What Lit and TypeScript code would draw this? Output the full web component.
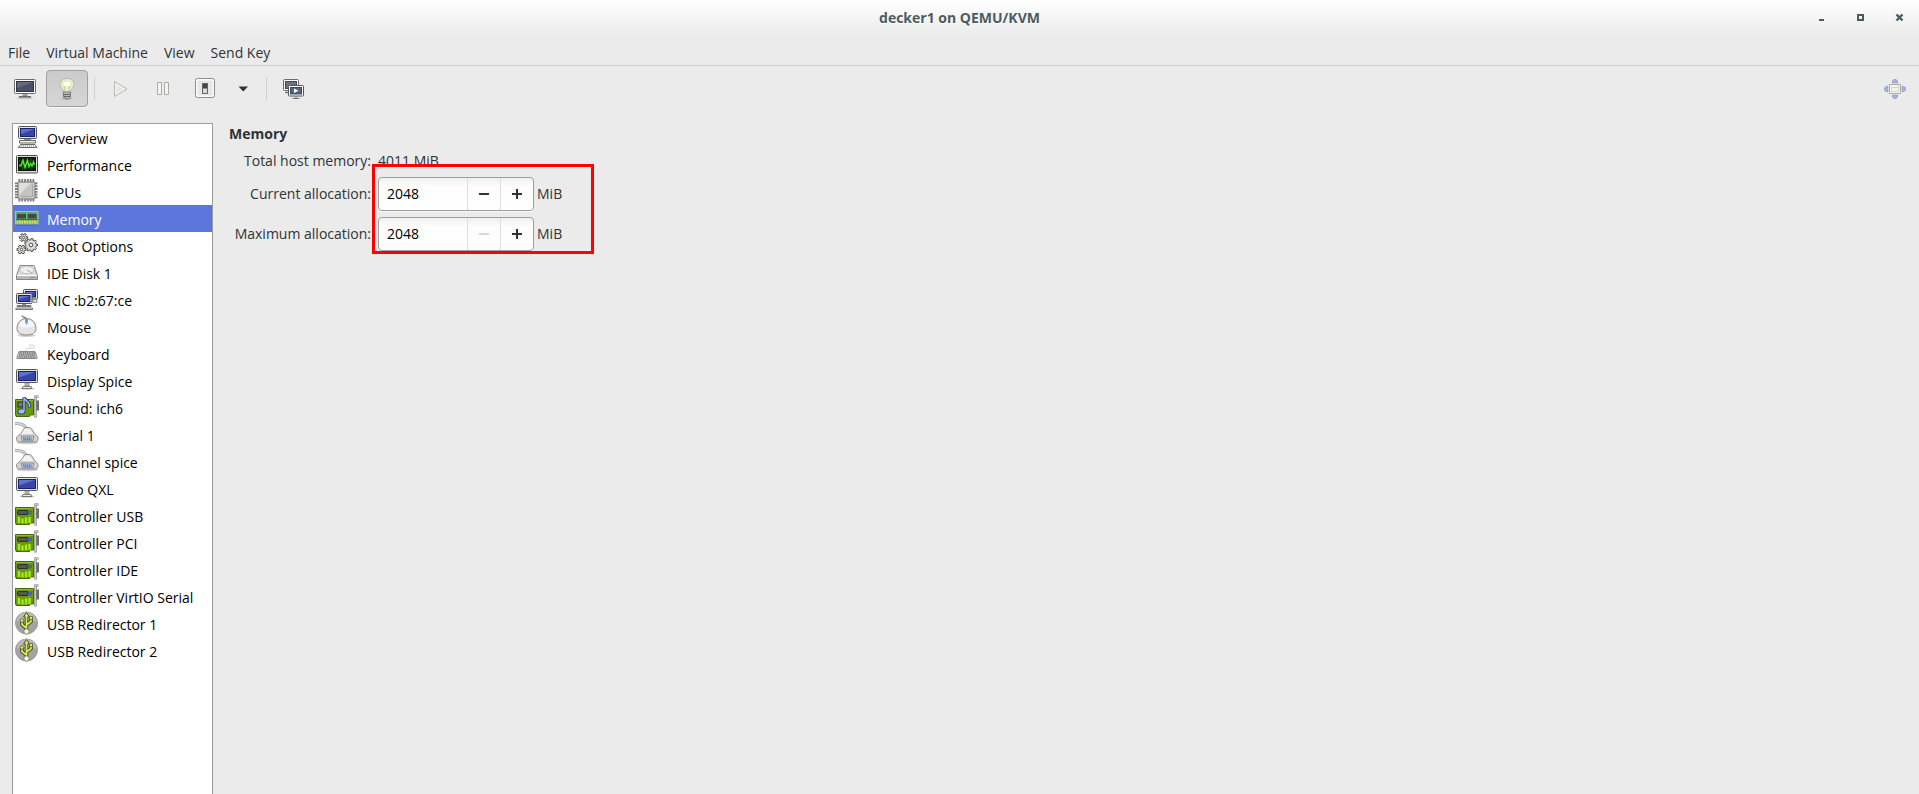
import { LitElement, html, css, svg, nothing } from "lit";
import { customElement, property, state } from "lit/decorators.js";

const screen = (x: number, y: number, w: number, h: number) => svg`
  <rect x=${x} y=${y} width=${w} height=${h} rx="1" fill="#e2e2de" stroke="#555753"/>
  <rect x=${x + 2} y=${y + 2} width=${w - 4} height=${h - 4} fill="#3645a8" stroke="#1b1f6e"/>
  <path d="M${x + 2.5} ${y + 2.5}h${w - 5}l-${w - 5} ${(h - 5) * 0.7}z" fill="#7f8fdd" opacity=".6"/>`;

const card = svg`
  <path d="M.5 4.500h18v15.500h-4v1.500h-13.500v-1.500h-.5z" fill="#69990f" stroke="#47690b"/>
  <rect x="1" y="5" width="17" height="1" fill="#8dbb2c"/>`;

const bracket = svg`
  <path d="M23.500 1.500h-3v21M20.500 6.500h2.500v3h-2.500M20.500 11.500h2.500v3h-2.500" fill="none" stroke="#6f716d" stroke-width="2.200"/>
  <path d="M23.500 1.500h-3v21" fill="none" stroke="#c9cbc7"/>`;

const gear = (cx: number, cy: number, r: number, teeth: number) => {
  const points: string[] = [];
  for (let i = 0; i < teeth; i++) {
    for (const [offset, radius] of [[-0.3, r - 1.4], [-0.22, r], [0.22, r], [0.3, r - 1.4]]) {
      const angle = ((i + offset) / teeth) * Math.PI * 2;
      points.push(`${(cx + radius * Math.cos(angle)).toFixed(2)},${(cy + radius * Math.sin(angle)).toFixed(2)}`);
    }
  }
  return svg`
    <polygon points=${points.join(" ")} fill="#dddeda" stroke="#4f514d" stroke-linejoin="round"/>
    <circle cx=${cx} cy=${cy} r=${r * 0.28} fill="#fff" stroke="#4f514d"/>`;
};

const serial = svg`
  <ellipse cx="12.500" cy="20.500" rx="11" ry="1.800" fill="#000" opacity=".18"/>
  <path d="M0 1.500c7 0 9 1 12 5.500" fill="none" stroke="#a1a39f" stroke-width="3"/>
  <path d="M0 1.500c7 0 9 1 12 5.500" fill="none" stroke="#dadcd8" stroke-width="1.500"/>
  <path d="M1.500 15.500c1-2 4-3 5.500-5.500 1-2 2-4 3.500-4.500h4c2 .5 3 2.500 4 4.500 1.500 2.500 4 3.500 4.500 5.500v2c-.3 1.700-1.500 2.500-3 2.500h-15.500c-1.500 0-2.700-.8-3-2.500z" fill="#d4d5d3" stroke="#8b8d89"/>
  <path d="M6 12l4-5.500h4.500l4 5.500z" fill="#f2f2f1"/>
  <path d="M6 14h13l-1.300 5h-10.400z" fill="#c3cde0" stroke="#8b8d89"/>
  <path d="M8 15.800h9M8.500 17.500h8" stroke="#4d70b5" stroke-dasharray="1.200 .6" stroke-width="1.300"/>`;

const art: Record<string, unknown> = {
  computer: svg`
    <ellipse cx="12" cy="22" rx="11" ry="1.500" fill="#000" opacity=".12"/>
    ${screen(3.5, 1.5, 18, 12)}
    <path d="M9 14h7v2h-7z" fill="#888a85"/>
    <path d="M4.500 15.500h16v2.500h-16z" fill="#eeeeec" stroke="#6a6c68"/>
    <path d="M5.500 19.500h14.500l2 3h-18.500z" fill="#eeeeec" stroke="#6a6c68"/>
    <path d="M6 21h14" stroke="#888a85" stroke-dasharray="1 1"/>`,
  performance: svg`
    <rect x="1.500" y="3.500" width="21" height="17.500" rx="1" fill="#dcdcd8" stroke="#4c4e4a"/>
    <rect x="3.500" y="5.500" width="17" height="13" fill="#0c240c" stroke="#111"/>
    <path d="M4 9h16M4 12h16M4 15h16M8 6v12M12 6v12M16 6v12" stroke="#1f5c1f" stroke-width=".8"/>
    <path d="M4 13.500h2l2-5 2 7 2.500-7 1.500 6 1.500-3 1.500 2.500 1.500-4 1 3" fill="none" stroke="#52e62c" stroke-width="1.400"/>`,
  cpu: svg`
    <path d="M3.500 1.500h16M3.500 21h16" stroke="#777975" stroke-width="3" stroke-dasharray="1.800 1"/>
    <path d="M1.500 3.500v16M21 3.500v16" stroke="#777975" stroke-width="3" stroke-dasharray="1.800 1"/>
    <rect x="3" y="3" width="17" height="17" rx="1" fill="#c4c5c3" stroke="#80827e"/>
    <path d="M4 16v-12h12z" fill="#dfe0de"/>
    <path d="M6 17.500h11.500v-12" fill="none" stroke="#a9aba7"/>`,
  memory: svg`
    <rect x=".5" y="5.500" width="22.500" height="12.500" fill="#57a866" stroke="#9acfa4"/>
    <path d="M2 8h19.500v4.500h-19.500z" fill="#4b4548"/>
    <path d="M11.800 6.500v7" stroke="#37e05f" stroke-width="1.500"/>
    <path d="M1 13.500h22" stroke="#2d7a3e"/>
    <path d="M1.500 16h21" stroke="#eadb55" stroke-width="3" stroke-dasharray="1.800 .7"/>
    <path d="M1 19h22" stroke="#254180" opacity=".45"/>`,
  boot: svg`${gear(8.5, 4.5, 4.2, 6)}${gear(6.5, 16.5, 4.6, 6)}${gear(16, 12, 6.5, 9)}`,
  disk: svg`
    <path d="M5 5.500h14l3.500 10v4h-21v-4z" fill="#dcdddb" stroke="#858783"/>
    <path d="M2 15.500h20v3.500h-20z" fill="#b8bab6"/>
    <path d="M2 15.500h20" stroke="#fff"/>
    <ellipse cx="12" cy="10" rx="7" ry="3.800" fill="#eeefed" stroke="#c0c2be"/>
    <path d="M12 10l5 3" stroke="#aaaca8"/>
    <path d="M15 17.500h5" stroke="#777975" stroke-dasharray="1 .7"/>`,
  network: svg`
    ${screen(8.5, 2.5, 14, 9.5)}
    <path d="M18 12.500h4v3h-4z" fill="#ddd" stroke="#767874" stroke-width=".7"/>
    ${screen(1.5, 6.5, 15.5, 10)}
    <path d="M7 17h4v1.500h-4z" fill="#888a85"/>
    <path d="M2 18.500h14v1h-14zM1.500 21h16v1.500h-17z" fill="#eee" stroke="#777975"/>`,
  mouse: svg`
    <ellipse cx="11.500" cy="21.500" rx="9" ry="1.500" fill="#000" opacity=".2"/>
    <path d="M7 1.500c0 3 4 0 4.500 4" fill="none" stroke="#6b6d69" stroke-width="1.200"/>
    <path d="M11.500 4.500c6 0 9.500 5 9.500 10 0 4-3 6.500-9.500 6.500s-9.500-2.500-9.500-6.500c0-5 3.500-10 9.500-10z" fill="#e4e5e3" stroke="#858783"/>
    <path d="M11.500 5.500c-4 0-7 3-8 6.500 5 2 11 2 16 0-1-3.500-4-6.500-8-6.500z" fill="#f5f5f5"/>
    <path d="M10 5h3v3l-1.500 3-1.500-3z" fill="#7897d6"/>`,
  keyboard: svg`
    <path d="M11 10c0-2 1-3 4-3s5 0 4-2-4 0-5-1" fill="none" stroke="#cfd1cd"/>
    <path d="M4 10.500h16l2 5.500v1.500h-20v-1.500z" fill="#dededc" stroke="#8b8d89"/>
    <path d="M4.500 12h15.500M4 14h16.500M3.500 16h17" stroke="#666864" stroke-dasharray="1.300 .5" stroke-width="1.300"/>`,
  display: svg`
    <ellipse cx="12" cy="20.500" rx="8" ry="1.500" fill="#000" opacity=".15"/>
    ${screen(1.5, 1.5, 21, 13)}
    <path d="M10 15h4v3h-4z" fill="#bbb" stroke="#777975" stroke-width=".6"/>
    <path d="M8 18.500h8l1 2h-10z" fill="#eee" stroke="#777975"/>`,
  sound: svg`${card}
    <rect x="3" y="7" width="5" height="5" fill="#777975" stroke="#333"/>
    ${bracket}
    <path d="M9 16v-13.500c1 3 6 3 5.500 10" fill="none" stroke="#253f78" stroke-width="3.200"/>
    <ellipse cx="6.500" cy="16.500" rx="3.500" ry="2.700" fill="#a0bdeb" stroke="#253f78"/>
    <path d="M9 16v-13c1 3 6 3 5.500 9" fill="none" stroke="#a0bdeb" stroke-width="1.400"/>`,
  serial,
  card: svg`${card}
    <path d="M4 20v-6M7.500 20.500v-5M11 20.500v-6M14.500 20v-6" stroke="#a4ee12" stroke-width="2.300"/>
    <rect x="2.500" y="7.500" width="10.500" height="4" rx="1" fill="#555852" stroke="#2c2e2a"/>
    <path d="M13 8.500h4M13 10.500h4" stroke="#3c62a8" stroke-width="1.300"/>
    ${bracket}`,
  usb: svg`
    <circle cx="11.500" cy="12" r="11" fill="#a3a4a2" stroke="#999b97"/>
    <path d="M1.500 11a10 10 0 0 1 20 0c-6-3-14-3-20 0z" fill="#b9bab8"/>
    <path d="M11.500 20v-16M11.500 17l-4.500-3.500v-4M11.500 14l4.500-3.500v-4" fill="none" stroke="#4a5128" stroke-width="3.600"/>
    <path d="M11.500 1.500l3 4.500h-6z" fill="#dcec60" stroke="#4a5128"/>
    <path d="M11.500 20v-15M11.500 17l-4.500-3.500v-4M11.500 14l4.500-3.500v-4" fill="none" stroke="#dcec60" stroke-width="1.600"/>
    <circle cx="7" cy="9.500" r="1.800" fill="#dcec60" stroke="#4a5128" stroke-width=".7"/>
    <path d="M14.500 5.500h3v3h-3z" fill="#dcec60" stroke="#4a5128" stroke-width=".7"/>
    <circle cx="11.500" cy="20.500" r="2.600" fill="#fbfde0" stroke="#6b7050" stroke-width=".7"/>`,
  console: svg`
    <ellipse cx="12" cy="21" rx="8" ry="1.300" fill="#000" opacity=".15"/>
    <rect x="1.500" y="2.500" width="21" height="14" rx="1" fill="#fff" stroke="#6a6c68"/>
    <rect x="3.500" y="4.500" width="17" height="10" fill="#4a5268" stroke="#30343f"/>
    <path d="M4 5h16l-16 6z" fill="#70788c" opacity=".7"/>
    <path d="M9.500 17h5v2h-5z" fill="#999"/><path d="M6 19h12v1.500h-12z" fill="#666864"/>`,
  bulb: svg`
    <ellipse cx="12" cy="21.500" rx="6" ry="1.300" fill="#000" opacity=".15"/>
    <path d="M12 1.500c4.500 0 7 2.500 7 6 0 4-3.500 4.500-4 8h-6c-.5-3.500-4-4-4-8 0-3.500 2.500-6 7-6z" fill="#e9e9e3" stroke="#b4b6b0"/>
    <ellipse cx="12" cy="7" rx="4.500" ry="3" fill="#fff" stroke="#e6f06a" stroke-width="1.200"/>
    <path d="M10.500 15l-1.500-6M13.500 15l1.500-6" fill="none" stroke="#c9cd9a"/>
    <path d="M8.500 15h7v5l-2 1.800h-3l-2-1.800z" fill="#b9bbb7" stroke="#7b7d79"/>
    <path d="M8.500 17.500h7M9 19.500h6" stroke="#686a66"/>`,
  play: svg`<path d="M5.500 4.500l12.500 7.500-12.500 7.500z" fill="#e6e7e5" stroke="#b9bbb7" stroke-linejoin="round"/><path d="M7 7l8.500 5-8.500 5z" fill="none" stroke="#fff" stroke-width=".7"/>`,
  pause: svg`<path d="M6.500 5.500h4v12h-4zM13.500 5.500h4v12h-4z" fill="#f5f6f3" stroke="#a9aba5"/>`,
  power: svg`
    <rect x="2.500" y="1.500" width="19" height="19" rx="2" fill="#f5f5f5" stroke="#8b8d89"/>
    <rect x="4" y="3" width="16" height="16" rx="1" fill="#e6e6e6" stroke="#fff"/>
    <rect x="9.500" y="6.500" width="5" height="10" fill="#444" stroke="#666"/>
    <path d="M10 11.500h4v4.500h-4z" fill="#d9d9d9"/>`,
  arrow: svg`<path d="M7.500 9.500h9.500l-4.750 5z" fill="#2e3436"/>`,
  screens: svg`
    <rect x="2.500" y="2.500" width="15" height="11" rx="1" fill="#fff" stroke="#6a6c68"/>
    <rect x="4.500" y="4.500" width="11" height="7" fill="#69728a" stroke="#40485c"/>
    <path d="M4 15.500h4" stroke="#777" stroke-width="1.500"/>
    <rect x="7.500" y="8.500" width="15" height="10.500" rx="1" fill="#fff" stroke="#555753"/>
    <rect x="9.500" y="10.500" width="11" height="6.500" fill="#59627c" stroke="#404860"/>
    <path d="M13 11.500l4.500 2.200-4.500 2.300z" fill="#fff"/>
    <path d="M13.500 20h3M11.500 21.500h7" stroke="#777"/>`,
  fullscreen: svg`
    <g fill="#a9b6dc" stroke="#8795c2" stroke-width=".8">
      <path d="M9.300 5.800c0-2.500 1.300-3.300 2.700-3.300s2.700.8 2.700 3.300zM9.300 18.200c0 2.500 1.300 3.300 2.700 3.300s2.700-.8 2.700-3.300z"/>
      <path d="M4.800 9.300c-2.500 0-3.300 1.300-3.300 2.700s.8 2.700 3.300 2.700zM19.200 9.300c2.500 0 3.300 1.300 3.300 2.700s-.8 2.700-3.300 2.700z"/>
    </g>
    <rect x="6.500" y="7.500" width="11" height="9" fill="#f3f4f0" stroke="#abaea5"/>
    <path d="M8.500 10.500h7v4h-7zM15 8.500v1.500h1.500" fill="none" stroke="#d3d6cc"/>`,
  minus: svg`<path d="M7 12h10" stroke="currentColor" stroke-width="2"/>`,
  plus: svg`<path d="M7 12h10M12 7v10" stroke="currentColor" stroke-width="2"/>`,
  minimize: svg`<path d="M10 14h5" stroke="currentColor" stroke-width="2"/>`,
  maximize: svg`<path d="M10 9h5v5h-5z" fill="none" stroke="currentColor" stroke-width="2"/>`,
  close: svg`<path d="M9.500 8.500l6 6M15.500 8.500l-6 6" stroke="currentColor" stroke-width="2.400"/>`,
};

const icon = (name: string) =>
  html`<svg class="icon" width="24" height="24" viewBox="0 0 24 24" aria-hidden="true">${art[name]}</svg>`;

@customElement("spin-field")
class SpinField extends LitElement {
  @property() label = "";
  @property({ type: Number }) value = 0;
  @property({ type: Boolean }) atMinimum = false;

  static styles = css`
    :host { display: grid; grid-template-columns: subgrid; grid-column: 1 / -1; align-items: center; }
    label { text-align: right; white-space: nowrap; }
    .row { display: flex; align-items: center; gap: 3px; }
    .spin {
      display: flex; width: 156px; height: 34px; box-sizing: border-box;
      border: 1px solid #9d9f9d; border-radius: 4px; overflow: hidden;
      background: linear-gradient(#f0f0f0, #fdfdfd 8px, #fff);
      box-shadow: 0 1px #f8f8f8;
    }
    input {
      flex: 1; min-width: 0; border: 0; padding: 0 8px; background: none;
      font: inherit; color: #000; outline: none;
    }
    button {
      width: 33px; padding: 0; border: 0; border-left: 1px solid #dcdcdc; background: none;
      color: #2e3436; display: grid; place-items: center;
    }
    button:disabled { color: #d8d8d8; }
  `;

  render() {
    return html`
      <label for="amount">${this.label}</label>
      <div class="row">
        <div class="spin">
          <input id="amount" type="text" inputmode="numeric" .value=${String(this.value)} />
          <button aria-label="Decrease" ?disabled=${this.atMinimum} @click=${() => this.value--}>${icon("minus")}</button>
          <button aria-label="Increase" @click=${() => this.value++}>${icon("plus")}</button>
        </div>
        <span>MiB</span>
      </div>`;
  }
}

const devices: [string, string][] = [
  ["computer", "Overview"],
  ["performance", "Performance"],
  ["cpu", "CPUs"],
  ["memory", "Memory"],
  ["boot", "Boot Options"],
  ["disk", "IDE Disk 1"],
  ["network", "NIC :b2:67:ce"],
  ["mouse", "Mouse"],
  ["keyboard", "Keyboard"],
  ["display", "Display Spice"],
  ["sound", "Sound: ich6"],
  ["serial", "Serial 1"],
  ["serial", "Channel spice"],
  ["display", "Video QXL"],
  ["card", "Controller USB"],
  ["card", "Controller PCI"],
  ["card", "Controller IDE"],
  ["card", "Controller VirtIO Serial"],
  ["usb", "USB Redirector 1"],
  ["usb", "USB Redirector 2"],
];

@customElement("app-root")
class AppRoot extends LitElement {
  @state() selected = "Memory";

  static styles = css`
    :host {
      display: flex; flex-direction: column; height: 100vh; overflow: hidden;
      background: #ebebeb; color: #2e3436;
      font: 14px/20px "Open Sans", "Noto Sans", sans-serif;
    }
    button { font: inherit; color: inherit; border: 0; padding: 0; background: none; }
    .icon { display: block; }
    .titlebar {
      display: grid; grid-template-columns: 1fr auto 1fr; align-items: center; height: 36px;
      background: linear-gradient(#fff, #ebebeb); color: #4b5b62;
    }
    h1 { grid-column: 2; margin: 0; font-size: 14px; line-height: 20px; font-weight: 700; text-shadow: 0 1px #fff; }
    .controls { display: flex; justify-content: flex-end; padding-right: 1px; }
    .controls button { width: 39px; height: 36px; display: grid; place-items: center; }
    .menubar { display: flex; height: 29px; border-bottom: 1px solid #cfcfcf; }
    .menubar button { padding: 4px 8px 0; display: flex; align-items: center; }
    .toolbar { display: flex; align-items: center; padding: 4px 3px 4px 4px; }
    .tool { width: 42px; height: 37px; box-sizing: border-box; display: grid; place-items: center; border-radius: 4px; }
    .narrow { width: 34px; }
    .pressed { background: linear-gradient(#cbcbcb, #d6d6d6); border: 1px solid #a0a0a0; box-shadow: 0 1px #f8f8f8; }
    .divider { width: 1px; height: 23px; margin: 0 5px 0 6px; background: #d0d0d0; }
    .spacer { flex: 1; }
    .content { flex: 1; min-height: 0; display: flex; gap: 16px; padding: 12px 12px 0; }
    .devices {
      width: 201px; box-sizing: border-box; flex: none; margin: 0; padding: 0; list-style: none;
      background: #fff; border: 1px solid #9b9b9b; border-bottom: 0; color: #000; overflow: hidden;
    }
    .device { display: flex; align-items: center; gap: 8px; width: 100%; height: 27px; padding: 0 2px 1px; text-align: left; white-space: nowrap; }
    .label { padding-top: 3px; }
    .selected { background: #5c76dc; color: #fff; }
    .panel { flex: 1; padding-top: 1px; }
    h2 { margin: 0; font-size: 14px; line-height: 20px; font-weight: 700; }
    .form { position: relative; display: grid; grid-template-columns: 142px max-content; gap: 6px 7px; padding-top: 7px; }
    .form dl { display: grid; grid-template-columns: subgrid; grid-column: 1 / -1; margin: 0; }
    dt { text-align: right; }
    dd { margin: 0; }
    .highlight {
      position: absolute; left: 143px; top: 20px; width: 222px; height: 90px; box-sizing: border-box;
      border: 3px solid #f00; pointer-events: none;
    }
  `;

  private tool(name: string, label: string, cls = "") {
    return html`<button class="tool ${cls}" aria-label=${label}>${icon(name)}</button>`;
  }

  render() {
    return html`
      <header class="titlebar">
        <h1>decker1 on QEMU/KVM</h1>
        <div class="controls">
          <button aria-label="Minimize">${icon("minimize")}</button>
          <button aria-label="Maximize">${icon("maximize")}</button>
          <button aria-label="Close">${icon("close")}</button>
        </div>
      </header>
      <nav class="menubar">
        ${["File", "Virtual Machine", "View", "Send Key"].map((m) => html`<button>${m}</button>`)}
      </nav>
      <div class="toolbar">
        ${this.tool("console", "Show console")}
        ${this.tool("bulb", "Show details", "pressed")}
        <span class="divider"></span>
        ${this.tool("play", "Run")}
        ${this.tool("pause", "Pause")}
        ${this.tool("power", "Shut down")}
        ${this.tool("arrow", "Shut down options", "narrow")}
        <span class="divider"></span>
        ${this.tool("screens", "Manage snapshots")}
        <span class="spacer"></span>
        ${this.tool("fullscreen", "Fullscreen")}
      </div>
      <main class="content">
        <ul class="devices">
          ${devices.map(
            ([glyph, name]) => html`<li>
              <button
                class="device ${name === this.selected ? "selected" : ""}"
                aria-current=${name === this.selected ? "true" : nothing}
                @click=${() => (this.selected = name)}
              >${icon(glyph)}<span class="label">${name}</span></button>
            </li>`
          )}
        </ul>
        <section class="panel">
          <h2>Memory</h2>
          <div class="form">
            <dl><dt>Total host memory:</dt><dd>4011 MiB</dd></dl>
            <spin-field label="Current allocation:" .value=${2048}></spin-field>
            <spin-field label="Maximum allocation:" .value=${2048} .atMinimum=${true}></spin-field>
            <div class="highlight"></div>
          </div>
        </section>
      </main>`;
  }
}
